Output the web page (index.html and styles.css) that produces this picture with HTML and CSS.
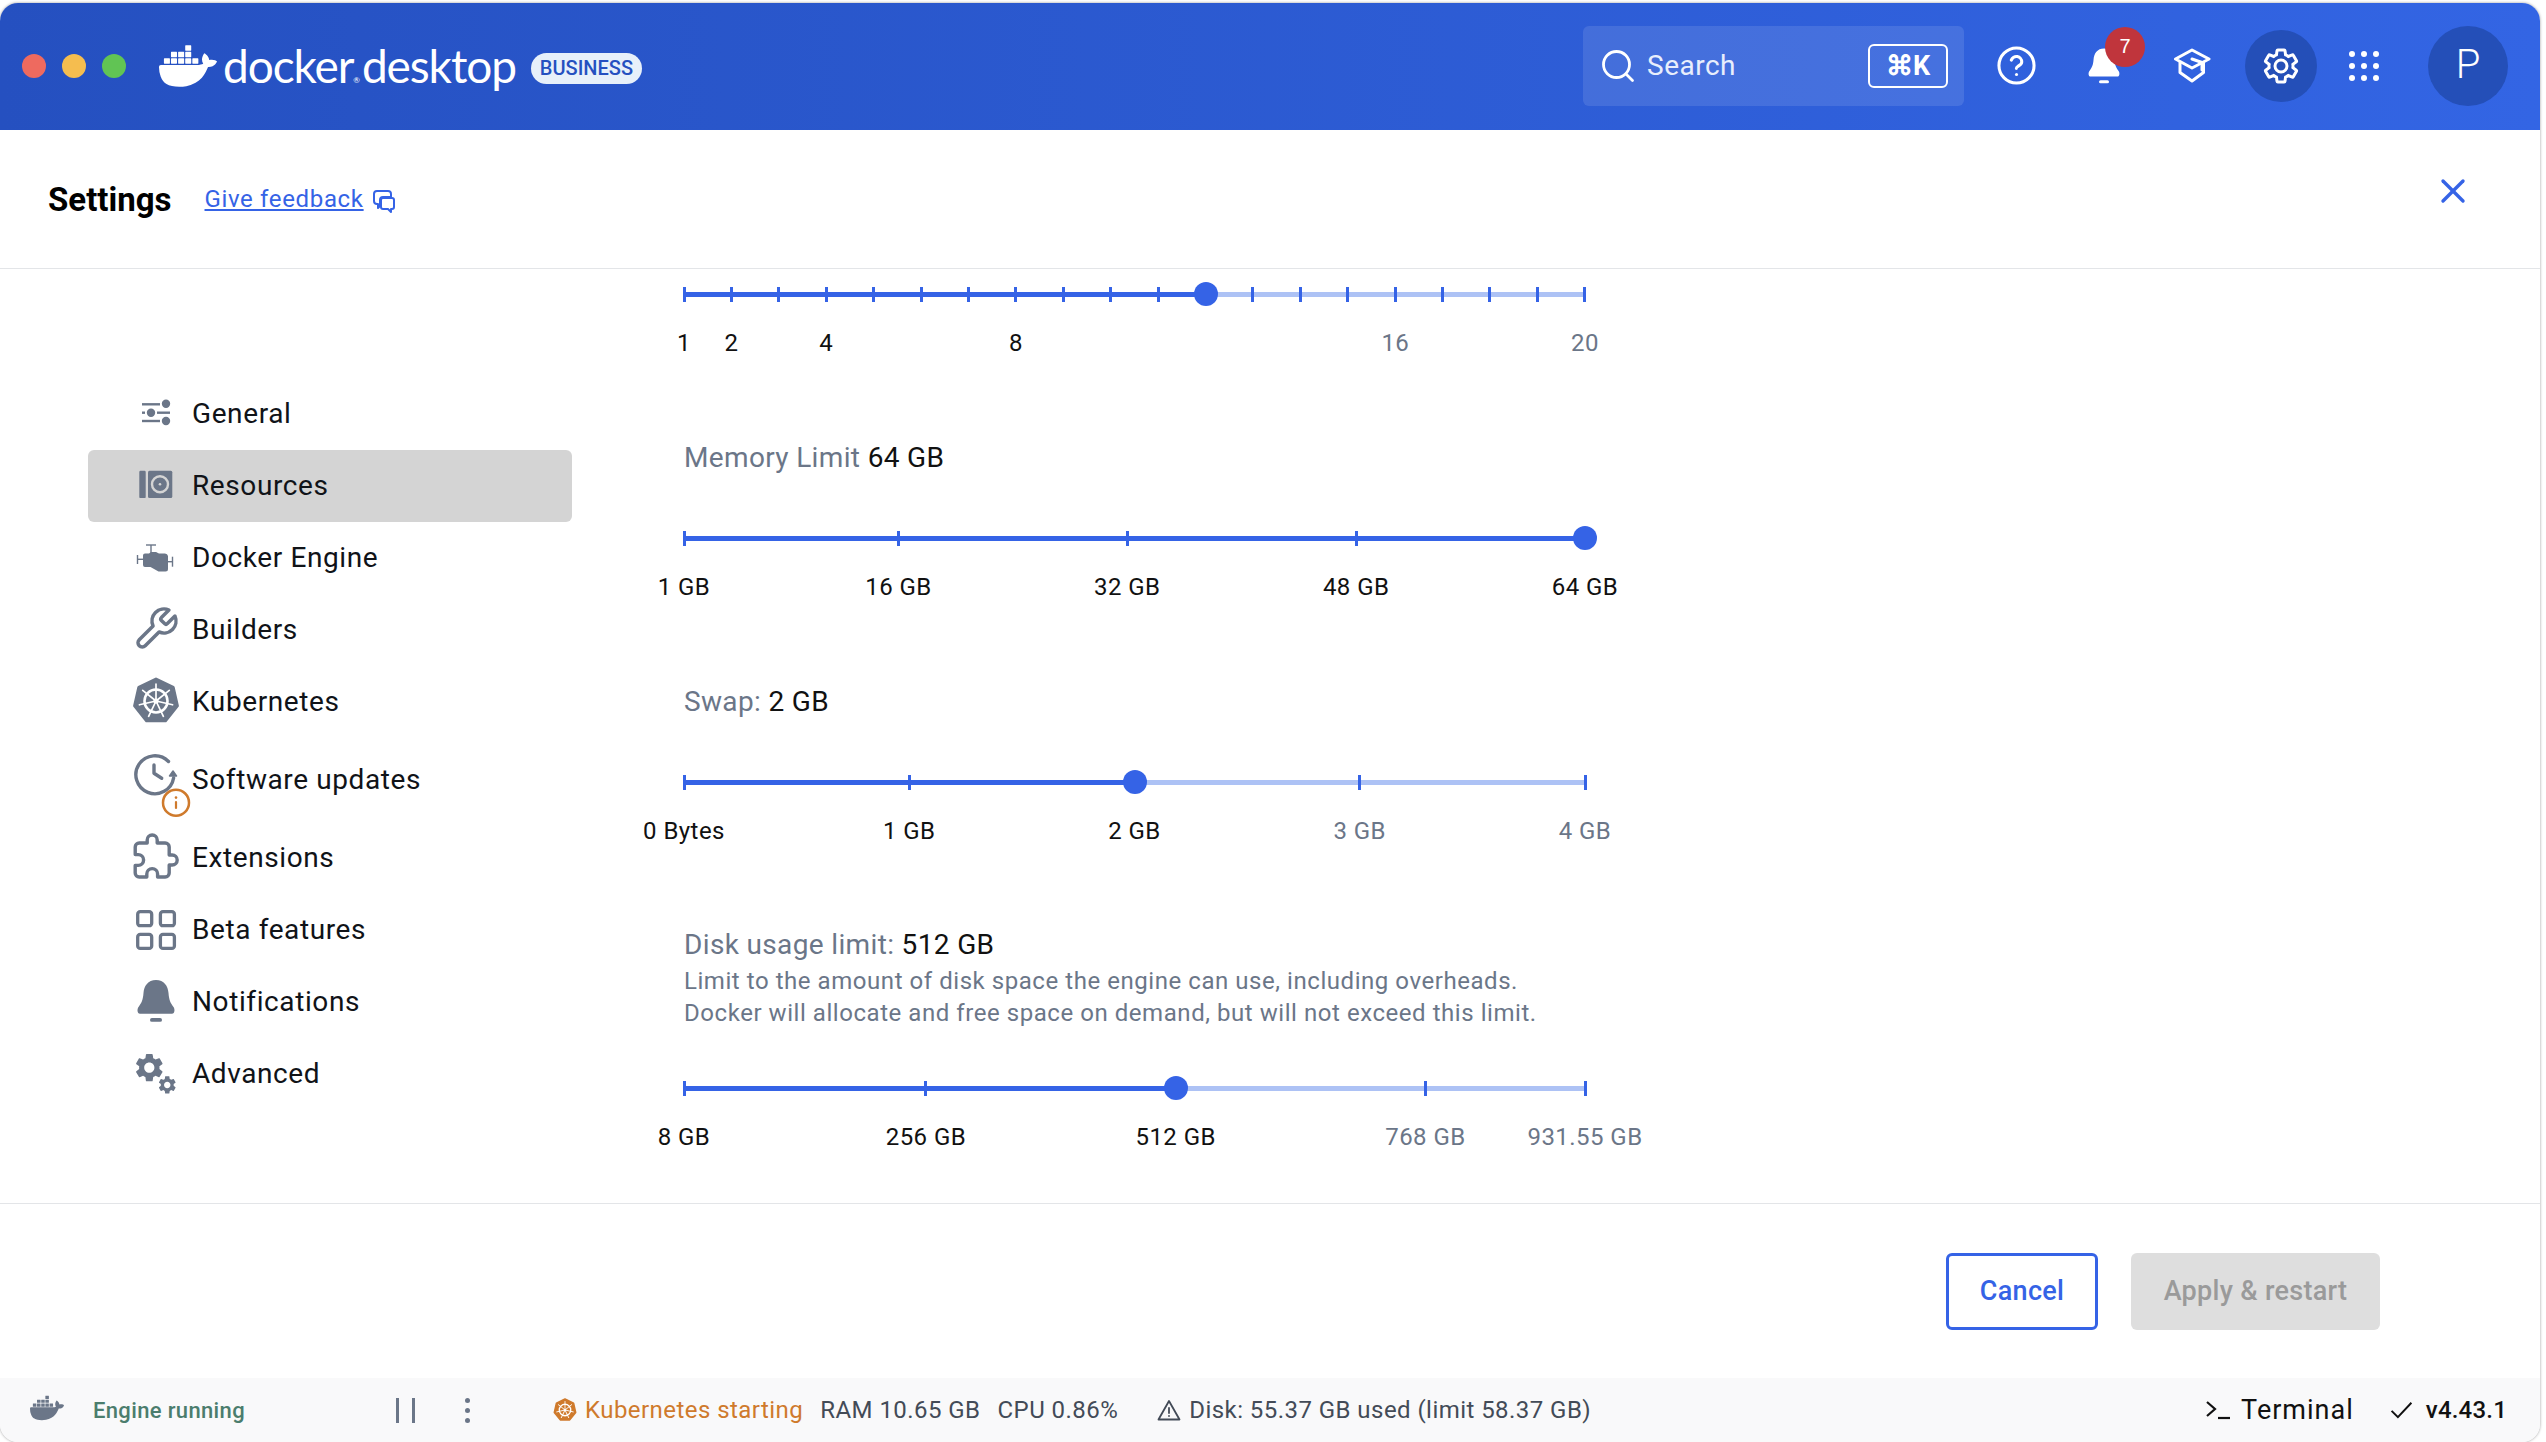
FILE: index.html
```html
<!DOCTYPE html>
<html lang="en">
<head>
    <meta charset="UTF-8">
    <title>Docker Desktop - Settings</title>
    <link rel="stylesheet" href="styles.css">
</head>
<body>
    <svg class="defs">
        <symbol id="gear" viewBox="0 0 24 24">
            <path d="M19.14 12.94c.04-.3.06-.61.06-.94 0-.32-.02-.64-.07-.94l2.03-1.58c.18-.14.23-.41.12-.61l-1.92-3.32c-.12-.22-.37-.29-.59-.22l-2.39.96c-.5-.38-1.03-.7-1.62-.94l-.36-2.54c-.04-.24-.24-.41-.48-.41h-3.84c-.24 0-.43.17-.47.41l-.36 2.54c-.59.24-1.13.57-1.62.94l-2.39-.96c-.22-.08-.47 0-.59.22L2.74 8.87c-.12.21-.08.47.12.61l2.03 1.58c-.05.3-.09.63-.09.94s.02.64.07.94l-2.03 1.58c-.18.14-.23.41-.12.61l1.92 3.32c.12.22.37.29.59.22l2.39-.96c.5.38 1.03.7 1.62.94l.36 2.54c.05.24.24.41.48.41h3.84c.24 0 .44-.17.47-.41l.36-2.54c.59-.24 1.13-.56 1.62-.94l2.39.96c.22.08.47 0 .59-.22l1.92-3.32c.12-.22.07-.47-.12-.61l-2.01-1.58zM12 15.6c-1.98 0-3.6-1.62-3.6-3.6s1.62-3.6 3.6-3.6 3.6 1.62 3.6 3.6-1.62 3.6-3.6 3.6z"/>
        </symbol>
        <symbol id="whale" viewBox="0 0 24 24">
            <path d="M13.983 11.078h2.119a.186.186 0 00.186-.185V9.006a.186.186 0 00-.186-.186h-2.119a.185.185 0 00-.185.185v1.888c0 .102.083.185.185.185m-2.954-5.43h2.118a.186.186 0 00.186-.186V3.574a.186.186 0 00-.186-.185h-2.118a.185.185 0 00-.185.185v1.888c0 .102.082.185.185.186m0 2.716h2.118a.187.187 0 00.186-.186V6.29a.186.186 0 00-.186-.185h-2.118a.185.185 0 00-.185.185v1.887c0 .102.082.185.185.186m-2.93 0h2.12a.186.186 0 00.184-.186V6.29a.185.185 0 00-.185-.185H8.1a.185.185 0 00-.185.185v1.887c0 .102.083.185.185.186m-2.964 0h2.119a.186.186 0 00.185-.186V6.29a.185.185 0 00-.185-.185H5.136a.186.186 0 00-.186.185v1.887c0 .102.084.185.186.186m5.893 2.715h2.118a.186.186 0 00.186-.185V9.006a.186.186 0 00-.186-.186h-2.118a.185.185 0 00-.185.185v1.888c0 .102.082.185.185.185m-2.93 0h2.12a.185.185 0 00.184-.185V9.006a.185.185 0 00-.184-.186h-2.12a.185.185 0 00-.184.185v1.888c0 .102.083.185.185.185m-2.964 0h2.119a.185.185 0 00.185-.185V9.006a.185.185 0 00-.184-.186h-2.12a.186.186 0 00-.186.186v1.887c0 .102.084.185.186.185m-2.92 0h2.12a.185.185 0 00.184-.185V9.006a.185.185 0 00-.184-.186h-2.12a.185.185 0 00-.184.185v1.888c0 .102.082.185.185.185M23.763 9.89c-.065-.051-.672-.51-1.954-.51-.338.001-.676.03-1.01.087-.248-1.7-1.653-2.53-1.716-2.566l-.344-.199-.226.327c-.284.438-.49.922-.612 1.43-.23.97-.09 1.882.403 2.661-.595.332-1.55.413-1.744.42H.751a.751.751 0 00-.75.748 11.376 11.376 0 00.692 4.062c.545 1.428 1.355 2.48 2.41 3.124 1.18.723 3.1 1.137 5.275 1.137.983.003 1.963-.086 2.93-.266a12.248 12.248 0 003.823-1.389c.98-.567 1.86-1.288 2.61-2.136 1.252-1.418 1.998-2.997 2.553-4.4h.221c1.372 0 2.215-.549 2.68-1.009.309-.293.55-.65.707-1.046l.098-.288Z"/>
        </symbol>
        <symbol id="kube" viewBox="0 0 48 48">
            <polygon points="24,2 41.2,10.3 45.4,28.9 33.5,43.8 14.5,43.8 2.6,28.9 6.8,10.3" stroke="currentColor" stroke-width="3" stroke-linejoin="round"/>
            <g stroke="#fff" fill="none">
                <circle cx="24" cy="24" r="11.5" stroke-width="2.6"/>
                <g stroke-width="1.7" stroke-linecap="round">
                    <line x1="24" y1="24" x2="24" y2="7"/>
                    <line x1="24" y1="24" x2="24" y2="7" transform="rotate(51.4 24 24)"/>
                    <line x1="24" y1="24" x2="24" y2="7" transform="rotate(102.9 24 24)"/>
                    <line x1="24" y1="24" x2="24" y2="7" transform="rotate(154.3 24 24)"/>
                    <line x1="24" y1="24" x2="24" y2="7" transform="rotate(205.7 24 24)"/>
                    <line x1="24" y1="24" x2="24" y2="7" transform="rotate(257.1 24 24)"/>
                    <line x1="24" y1="24" x2="24" y2="7" transform="rotate(308.6 24 24)"/>
                </g>
            </g>
            <circle cx="24" cy="24" r="2.6" fill="#fff"/>
        </symbol>
        <symbol id="bell" viewBox="0 0 48 48">
            <path d="M24 3c-8 0-12 6-12.5 13-.5 7-2 10-5 14-1.500 2-1.500 6.700 1.500 6.700h32c3 0 3-4.700 1.500-6.700-3-4-4.500-7-5-14C36 9 32 3 24 3z"/>
            <rect x="18" y="41" width="12" height="3.800" rx="1.900"/>
        </symbol>
    </svg>

    <div class="window">
        <header class="titlebar">
            <div class="traffic">
                <span class="light red"></span>
                <span class="light yellow"></span>
                <span class="light green"></span>
            </div>
            <svg class="logo-whale"><use href="#whale"/></svg>
            <div class="wordmark"><span class="wm-docker">docker</span><sup class="wm-reg">®</sup><span class="wm-desktop">desktop</span></div>
            <span class="plan-badge">BUSINESS</span>

            <div class="search">
                <svg class="search-icon" viewBox="0 0 34 34" fill="none" stroke="#fff" stroke-width="2.800" stroke-linecap="round">
                    <circle cx="15.500" cy="15.500" r="13"/>
                    <line x1="25" y1="25" x2="31.500" y2="31.500"/>
                </svg>
                <span class="search-text">Search</span>
                <kbd class="shortcut">⌘K</kbd>
            </div>

            <button class="top-btn help">
                <svg viewBox="0 0 24 24" width="43" height="43" fill="none" stroke="#fff" stroke-width="1.700" stroke-linecap="round" stroke-linejoin="round">
                    <circle cx="12" cy="12" r="9.800"/>
                    <path d="M9.090 9a3 3 0 0 1 5.830 1c0 2-3 2.300-3 3.600"/>
                    <line x1="12" y1="17" x2="12.010" y2="17"/>
                </svg>
            </button>
            <button class="top-btn notif">
                <svg width="40" height="40" fill="#fff"><use href="#bell"/></svg>
                <span class="notif-count">7</span>
            </button>
            <button class="top-btn learn">
                <svg viewBox="0 0 37 36" width="37" height="36" fill="none" stroke="#fff" stroke-width="3" stroke-linejoin="round" stroke-linecap="round">
                    <path d="M18 2 35 11 18 20 1.500 11z"/>
                    <path d="M6 14.500V24.500L18 33 29.500 24.500V14.500"/>
                    <path d="M18 11 28 14.500V22"/>
                </svg>
            </button>
            <button class="top-btn cog">
                <svg width="40" height="40" fill="none" stroke="#fff" stroke-width="1.800"><use href="#gear"/></svg>
            </button>
            <button class="top-btn apps">
                <svg viewBox="0 0 30 30" width="30" height="30" fill="#fff">
                    <circle cx="3" cy="3" r="3"/><circle cx="15" cy="3" r="3"/><circle cx="27" cy="3" r="3"/>
                    <circle cx="3" cy="15" r="3"/><circle cx="15" cy="15" r="3"/><circle cx="27" cy="15" r="3"/>
                    <circle cx="3" cy="27" r="3"/><circle cx="15" cy="27" r="3"/><circle cx="27" cy="27" r="3"/>
                </svg>
            </button>
            <div class="avatar">P</div>
        </header>

        <div class="settings-head">
            <h1>Settings</h1>
            <a class="feedback" href="#">Give feedback</a>
            <svg class="feedback-icon" viewBox="0 0 24 24" fill="none" stroke="#3563e6" stroke-width="2" stroke-linejoin="round">
                <path d="M5 2h11a3 3 0 0 1 3 3v3H11a3 3 0 0 0-3 3v6l-2 2v-4H5a3 3 0 0 1-3-3V5a3 3 0 0 1 3-3z"/>
                <path d="M11 9h9a2 2 0 0 1 2 2v7a2 2 0 0 1-2 2h-1v3l-3-3h-5a2 2 0 0 1-2-2v-7a2 2 0 0 1 2-2z"/>
            </svg>
            <svg class="close" viewBox="0 0 26 26" stroke="#3563e6" stroke-width="3.400" stroke-linecap="round">
                <line x1="3" y1="3" x2="23" y2="23"/>
                <line x1="23" y1="3" x2="3" y2="23"/>
            </svg>
        </div>

        <div class="content">
            <nav class="sidebar">
                <a class="nav-item">
                    <svg class="nav-icon" viewBox="0 0 48 48" fill="#6b7688" stroke="#6b7688" stroke-width="2.400">
                        <line x1="10" y1="15.300" x2="28" y2="15.300"/><circle cx="34" cy="14.700" r="3" />
                        <line x1="10" y1="23.700" x2="13" y2="23.700"/><circle cx="19" cy="23.700" r="3"/><line x1="25" y1="23.700" x2="38" y2="23.700"/>
                        <line x1="10" y1="32" x2="28" y2="32"/><circle cx="34" cy="32" r="3"/>
                    </svg>
                    General
                </a>
                <a class="nav-item active">
                    <svg class="nav-icon" viewBox="0 0 48 48" fill="#6b7688">
                        <rect x="7.300" y="9.700" width="6.400" height="27.400" rx="1.200"/>
                        <rect x="16" y="9.700" width="24.300" height="27.400" rx="1.500"/>
                        <circle cx="28" cy="23.300" r="8" fill="none" stroke="#d4d4d4" stroke-width="2.400"/>
                        <circle cx="28" cy="23.300" r="1.300" fill="#d4d4d4"/>
                    </svg>
                    Resources
                </a>
                <a class="nav-item">
                    <svg class="nav-icon" viewBox="0 0 48 48" fill="#6b7688" stroke="#6b7688" stroke-width="1.400">
                        <line x1="14" y1="12" x2="24" y2="12"/><line x1="19" y1="12" x2="19" y2="20"/>
                        <line x1="5.500" y1="22" x2="5.500" y2="31"/><line x1="5.500" y1="26.300" x2="12" y2="26.300"/>
                        <line x1="40.500" y1="23.700" x2="40.500" y2="33.700"/><line x1="36" y1="28.700" x2="40.500" y2="28.700"/>
                        <path d="M11 22.500q0-2 2-2h4l2-1.600h5l3 1.600h6q2.500 0 3 2.500v13q0 2.500-2.500 2.500h-7l-8-4.500h-5.500q-2 0-2-2z" stroke="none"/>
                    </svg>
                    Docker Engine
                </a>
                <a class="nav-item">
                    <svg class="nav-icon" viewBox="0 0 24 24" fill="none" stroke="#6b7688" stroke-width="1.750" stroke-linecap="round" stroke-linejoin="round">
                        <path d="M14.700 6.300a1 1 0 0 0 0 1.400l1.600 1.600a1 1 0 0 0 1.400 0l3.770-3.770a6 6 0 0 1-7.940 7.940l-6.910 6.910a2.120 2.120 0 0 1-3-3l6.910-6.910a6 6 0 0 1 7.940-7.940l-3.760 3.760z"/>
                    </svg>
                    Builders
                </a>
                <a class="nav-item">
                    <svg class="nav-icon k8s-side"><use href="#kube"/></svg>
                    Kubernetes
                </a>
                <a class="nav-item tall">
                    <svg class="nav-icon has-badge" viewBox="0 0 48 48" fill="none" stroke="#6b7688" stroke-width="3.400" stroke-linecap="round" stroke-linejoin="round">
                        <path d="M36.500 6.500A19 19 0 1 0 41.600 23"/>
                        <path d="M22 10v8.300l7.700 5"/>
                        <polygon points="37.500,21 44.500,21 41,16" fill="#6b7688" stroke-width="1.500"/>
                        <circle cx="44" cy="47.700" r="13" fill="#fff" stroke="#cf7a2c" stroke-width="2.500"/>
                        <line x1="44" y1="47" x2="44" y2="53" stroke="#cf7a2c" stroke-width="2.200"/>
                        <line x1="44" y1="42.500" x2="44" y2="42.600" stroke="#cf7a2c" stroke-width="2.600"/>
                    </svg>
                    Software updates
                </a>
                <a class="nav-item">
                    <svg class="nav-icon" viewBox="0 0 24 24" fill="none" stroke="#6b7688" stroke-width="1.700" stroke-linejoin="round">
                        <path transform="translate(-.4 0)" d="M20.500 11H19V7c0-1.100-.9-2-2-2h-4V3.500C13 2.120 11.880 1 10.500 1S8 2.120 8 3.500V5H4c-1.100 0-1.990.9-1.990 2v3.800H3.500c1.490 0 2.700 1.210 2.700 2.700s-1.210 2.700-2.700 2.700H2V20c0 1.100.9 2 2 2h3.800v-1.500c0-1.490 1.210-2.700 2.700-2.700 1.490 0 2.700 1.210 2.700 2.700V22H17c1.100 0 2-.9 2-2v-4h1.500c1.380 0 2.500-1.120 2.500-2.500S21.880 11 20.500 11z"/>
                    </svg>
                    Extensions
                </a>
                <a class="nav-item">
                    <svg class="nav-icon" viewBox="0 0 48 48" fill="none" stroke="#6b7688" stroke-width="3.300">
                        <rect x="5.700" y="6.700" width="14" height="14" rx="2.500"/>
                        <rect x="28.400" y="6.700" width="14" height="14" rx="2.500"/>
                        <rect x="5.700" y="29.400" width="14" height="14" rx="2.500"/>
                        <rect x="28.400" y="29.400" width="14" height="14" rx="2.500"/>
                    </svg>
                    Beta features
                </a>
                <a class="nav-item">
                    <svg class="nav-icon" fill="#6b7688"><use href="#bell"/></svg>
                    Notifications
                </a>
                <a class="nav-item">
                    <svg class="nav-icon" viewBox="0 0 48 48" fill="#6b7688">
                        <use href="#gear" x="0.300" y="1.700" width="34" height="34"/>
                        <use href="#gear" x="24.500" y="25.200" width="21.500" height="21.500"/>
                    </svg>
                    Advanced
                </a>
            </nav>

            <main class="panel">
                <section class="setting">
                    <div class="slider">
                        <div class="track"><div class="fill" style="width:57.89%"></div></div>
                        <div class="ticks">
                            <i></i><i></i><i></i><i></i><i></i><i></i><i></i><i></i><i></i><i></i>
                            <i></i><i></i><i></i><i></i><i></i><i></i><i></i><i></i><i></i><i></i>
                        </div>
                        <span class="thumb" style="left:57.89%"></span>
                    </div>
                    <div class="scale">
                        <span style="left:0%">1</span>
                        <span style="left:5.26%">2</span>
                        <span style="left:15.79%">4</span>
                        <span style="left:36.84%">8</span>
                        <span class="off" style="left:78.95%">16</span>
                        <span class="off" style="left:100%">20</span>
                    </div>
                </section>

                <section class="setting">
                    <div class="setting-title">Memory Limit <b>64 GB</b></div>
                    <div class="slider">
                        <div class="track"><div class="fill" style="width:100%"></div></div>
                        <span class="tick" style="left:0%"></span>
                        <span class="tick" style="left:23.8%"></span>
                        <span class="tick" style="left:49.2%"></span>
                        <span class="tick" style="left:74.6%"></span>
                        <span class="thumb" style="left:100%"></span>
                    </div>
                    <div class="scale">
                        <span style="left:0%">1 GB</span>
                        <span style="left:23.8%">16 GB</span>
                        <span style="left:49.2%">32 GB</span>
                        <span style="left:74.6%">48 GB</span>
                        <span style="left:100%">64 GB</span>
                    </div>
                </section>

                <section class="setting">
                    <div class="setting-title">Swap: <b>2 GB</b></div>
                    <div class="slider">
                        <div class="track"><div class="fill" style="width:50%"></div></div>
                        <span class="tick" style="left:0%"></span>
                        <span class="tick" style="left:25%"></span>
                        <span class="tick" style="left:75%"></span>
                        <span class="tick" style="left:100%"></span>
                        <span class="thumb" style="left:50%"></span>
                    </div>
                    <div class="scale">
                        <span style="left:0%">0 Bytes</span>
                        <span style="left:25%">1 GB</span>
                        <span style="left:50%">2 GB</span>
                        <span class="off" style="left:75%">3 GB</span>
                        <span class="off" style="left:100%">4 GB</span>
                    </div>
                </section>

                <section class="setting">
                    <div class="setting-title">Disk usage limit: <b>512 GB</b></div>
                    <p class="setting-desc">Limit to the amount of disk space the engine can use, including overheads.<br>Docker will allocate and free space on demand, but will not exceed this limit.</p>
                    <div class="slider">
                        <div class="track"><div class="fill" style="width:54.57%"></div></div>
                        <span class="tick" style="left:0%"></span>
                        <span class="tick" style="left:26.85%"></span>
                        <span class="tick" style="left:82.29%"></span>
                        <span class="tick" style="left:100%"></span>
                        <span class="thumb" style="left:54.57%"></span>
                    </div>
                    <div class="scale">
                        <span style="left:0%">8 GB</span>
                        <span style="left:26.85%">256 GB</span>
                        <span style="left:54.57%">512 GB</span>
                        <span class="off" style="left:82.29%">768 GB</span>
                        <span class="off" style="left:100%">931.55 GB</span>
                    </div>
                </section>
            </main>
        </div>

        <div class="actions">
            <button class="btn btn-outline">Cancel</button>
            <button class="btn btn-disabled">Apply &amp; restart</button>
        </div>

        <footer class="statusbar">
            <svg class="status-whale" fill="#6b7688"><use href="#whale"/></svg>
            <span class="engine">Engine running</span>
            <span class="pause"><i></i><i></i></span>
            <span class="more"><i></i><i></i><i></i></span>
            <svg class="status-kube"><use href="#kube"/></svg>
            <span class="kube-text">Kubernetes starting</span>
            <span class="stat">RAM 10.65 GB</span>
            <span class="stat">CPU 0.86%</span>
            <svg class="warn" viewBox="0 0 24 24" fill="none" stroke="#434b57" stroke-width="1.800" stroke-linejoin="round" stroke-linecap="round">
                <path d="M12 3 22.500 21.500h-21z"/>
                <line x1="12" y1="10" x2="12" y2="15"/>
                <line x1="12" y1="18" x2="12" y2="18.100"/>
            </svg>
            <span class="disk">Disk: 55.37 GB used (limit 58.37 GB)</span>
            <span class="status-right">
                <svg class="term-icon" viewBox="0 0 24 20" fill="none" stroke="#111" stroke-width="2.200">
                    <path d="M1 2l8 7-8 7"/>
                    <line x1="12" y1="18" x2="24" y2="18"/>
                </svg>
                <span class="terminal">Terminal</span>
                <svg class="check" viewBox="0 0 24 20" fill="none" stroke="#111" stroke-width="2.200"><path d="M1 11l7 7L23 2"/></svg>
                <span class="version">v4.43.1</span>
            </span>
        </footer>
    </div>
</body>
</html>
```

FILE: styles.css
```css
* {
    box-sizing: border-box;
}
html, body {
    margin: 0;
    height: 100%;
    background: #fff;
}
body {
    font-family: Roboto, sans-serif;
    font-size: 23px;
    color: #111;
    overflow: hidden;
}
.defs {
    position: absolute;
    width: 0;
    height: 0;
}
.window {
    display: flex;
    flex-direction: column;
    width: 2540px;
    height: 1439px;
    margin-top: 3px;
    border-radius: 18px;
    overflow: hidden;
    box-shadow: 0 0 3px #9a9a9a;
    background: #fff;
}

/* top bar */
.titlebar {
    display: flex;
    align-items: center;
    flex: none;
    height: 127px;
    padding-bottom: 2px;
    background: linear-gradient(90deg, #2550c0, #3365e4);
    color: #fff;
}
.traffic {
    display: flex;
    gap: 16px;
    margin-left: 22px;
}
.light {
    width: 24px;
    height: 24px;
    border-radius: 50%;
}
.red { background: #ee6a5f; }
.yellow { background: #f5bd4f; }
.green { background: #61c454; }
.logo-whale {
    width: 58px;
    height: 58px;
    margin-left: 33px;
    fill: #fff;
}
.wordmark {
    display: flex;
    align-items: baseline;
    margin-left: 6px;
    font-family: Lato, sans-serif;
    font-weight: 400;
    font-size: 46px;
    letter-spacing: -1.100px;
    line-height: 50px;
}
.wm-reg {
    font-size: 8px;
    margin: 0 2px 0 0;
    letter-spacing: 0;
    line-height: 8px;
}
.plan-badge {
    margin: 5px 0 0 15px;
    padding: 0 9px;
    height: 31px;
    line-height: 31px;
    border-radius: 16px;
    background: #e7f0fa;
    color: #2550c0;
    font-size: 20px;
    font-weight: 500;
}
.search {
    display: flex;
    align-items: center;
    width: 381px;
    height: 80px;
    margin-left: auto;
    padding: 0 16px 0 18px;
    background: rgba(255, 255, 255, 0.11);
    border-radius: 6px;
}
.search-icon {
    width: 34px;
    height: 34px;
}
.search-text {
    margin-left: 12px;
    font-size: 28px;
    letter-spacing: .5px;
    color: #e8eefc;
}
.shortcut {
    display: block;
    width: 80px;
    height: 44px;
    margin-left: auto;
    border: 2px solid #fff;
    border-radius: 6px;
    font-family: Roboto, sans-serif;
    font-size: 27px;
    font-weight: 700;
    line-height: 40px;
    text-align: center;
}
.top-btn {
    display: flex;
    align-items: center;
    justify-content: center;
    position: relative;
    width: 72px;
    height: 72px;
    padding: 0;
    border: 0;
    border-radius: 50%;
    background: none;
}
.help { margin-left: 16px; }
.notif { margin-left: 16px; }
.learn { margin-left: 16px; }
.cog {
    margin-left: 17px;
    background: #244fb8;
}
.apps { margin-left: 11px; }
.notif-count {
    position: absolute;
    top: -3px;
    left: 37px;
    width: 40px;
    height: 40px;
    border-radius: 50%;
    background: #c0353c;
    color: #fff;
    font-size: 20px;
    line-height: 38px;
    text-align: center;
}
.avatar {
    width: 80px;
    height: 80px;
    margin: 0 32px 0 28px;
    border-radius: 50%;
    background: #244fb8;
    font-size: 40px;
    font-weight: 300;
    line-height: 78px;
    text-align: center;
}

/* settings title row */
.settings-head {
    display: flex;
    align-items: center;
    flex: none;
    height: 139px;
    padding: 0 74px 0 48px;
    border-bottom: 1px solid #e3e5e8;
}
.settings-head h1 {
    margin: 0;
    font-size: 33px;
    font-weight: 700;
    color: #000;
}
.feedback {
    margin-left: 33px;
    color: #3563e6;
    font-size: 24px;
    letter-spacing: .65px;
}
.feedback-icon {
    width: 24px;
    height: 24px;
    margin: 3px 0 0 8px;
}
.close {
    width: 26px;
    height: 26px;
    margin: -16px 0 0 auto;
}

/* sidebar + sliders */
.content {
    display: flex;
    flex: 1;
    min-height: 0;
    overflow: hidden;
}
.sidebar {
    flex: none;
    width: 484px;
    margin-left: 88px;
    padding-top: 109px;
}
.nav-item {
    display: flex;
    align-items: center;
    height: 72px;
    padding: 0 0 2px 44px;
    border-radius: 6px;
    font-size: 28px;
    letter-spacing: .6px;
    color: #101318;
}
.nav-item.tall {
    height: 84px;
}
.nav-item.active {
    background: #d4d4d4;
}
.nav-icon {
    flex: none;
    width: 48px;
    height: 48px;
    margin-right: 12px;
    overflow: visible;
}
.k8s-side {
    color: #6b7688;
    fill: #6b7688;
}
.panel {
    flex: none;
    width: 901px;
    margin-left: 112px;
    padding-top: 1px;
}
.setting {
    margin-bottom: 79px;
}
.setting-title {
    height: 36px;
    margin-bottom: 38px;
    font-size: 28px;
    letter-spacing: .35px;
    line-height: 36px;
    color: #6b7688;
}
.setting-title b {
    font-weight: 400;
    color: #111;
}
.setting:last-child {
    margin-top: -1px;
}
.setting-desc {
    margin: -36px 0 35px;
    font-size: 24px;
    letter-spacing: .55px;
    line-height: 32px;
    color: #6b7688;
}
.slider {
    position: relative;
    height: 48px;
}
.track {
    position: absolute;
    top: 22px;
    left: 0;
    right: 0;
    height: 5px;
    background: #adc2f5;
}
.fill {
    height: 100%;
    background: #3563e6;
}
.ticks {
    display: flex;
    justify-content: space-between;
    position: absolute;
    top: 17px;
    left: -1.500px;
    right: -1.500px;
}
.ticks i {
    width: 3px;
    height: 15px;
    background: #3563e6;
}
.tick {
    position: absolute;
    top: 17px;
    width: 3px;
    height: 15px;
    margin-left: -1.500px;
    background: #3563e6;
}
.thumb {
    position: absolute;
    top: 12px;
    width: 24px;
    height: 24px;
    margin-left: -12px;
    border-radius: 50%;
    background: #3563e6;
}
.scale {
    position: relative;
    height: 36px;
    margin-top: 7px;
    font-size: 24px;
    letter-spacing: .45px;
    line-height: 36px;
    color: #111;
}
.scale span {
    position: absolute;
    transform: translateX(-50%);
    white-space: nowrap;
}
.scale .off {
    color: #6b7688;
}

/* cancel / apply */
.actions {
    display: flex;
    align-items: center;
    justify-content: flex-end;
    gap: 33px;
    flex: none;
    height: 175px;
    padding-right: 160px;
    border-top: 1px solid #e3e5e8;
}
.btn {
    height: 77px;
    border-radius: 6px;
    font-family: Roboto, sans-serif;
    font-size: 27px;
    font-weight: 500;
    letter-spacing: .3px;
}
.btn-outline {
    width: 152px;
    border: 3px solid #3563e6;
    background: #fff;
    color: #3563e6;
}
.btn-disabled {
    width: 249px;
    border: 0;
    background: #dedede;
    color: #9a9a9a;
}

/* status bar */
.statusbar {
    display: flex;
    align-items: center;
    flex: none;
    height: 64px;
    padding: 0 33px 0 30px;
    background: #f9f9fa;
    font-size: 24px;
    letter-spacing: .45px;
    color: #434b57;
    white-space: nowrap;
}
.status-whale {
    width: 34px;
    height: 34px;
    margin-top: -4px;
}
.engine {
    width: 303px;
    margin-left: 29px;
    font-size: 22px;
    font-weight: 500;
    letter-spacing: .35px;
    color: #4b7d6d;
}
.pause {
    display: flex;
    gap: 13px;
    width: 69px;
}
.pause i {
    width: 3px;
    height: 25px;
    background: #6b7688;
}
.more {
    display: flex;
    flex-direction: column;
    gap: 5px;
    width: 88px;
}
.more i {
    width: 5px;
    height: 5px;
    border-radius: 50%;
    background: #6b7688;
}
.status-kube {
    flex: none;
    width: 24px;
    height: 24px;
    color: #cf7a2c;
    fill: #cf7a2c;
}
.kube-text {
    margin-left: 8px;
    color: #cf7a2c;
}
.stat {
    margin-left: 17px;
}
.warn {
    width: 24px;
    height: 24px;
    margin-left: 39px;
}
.disk {
    margin-left: 8px;
}
.status-right {
    display: flex;
    align-items: center;
    margin-left: auto;
    color: #111;
    letter-spacing: .2px;
}
.term-icon {
    width: 24px;
    height: 20px;
}
.terminal {
    margin-left: 11px;
    font-size: 27px;
    letter-spacing: 1px;
}
.check {
    width: 23px;
    height: 18px;
    margin-left: 36px;
}
.version {
    margin-left: 13px;
    font-weight: 500;
}
```
